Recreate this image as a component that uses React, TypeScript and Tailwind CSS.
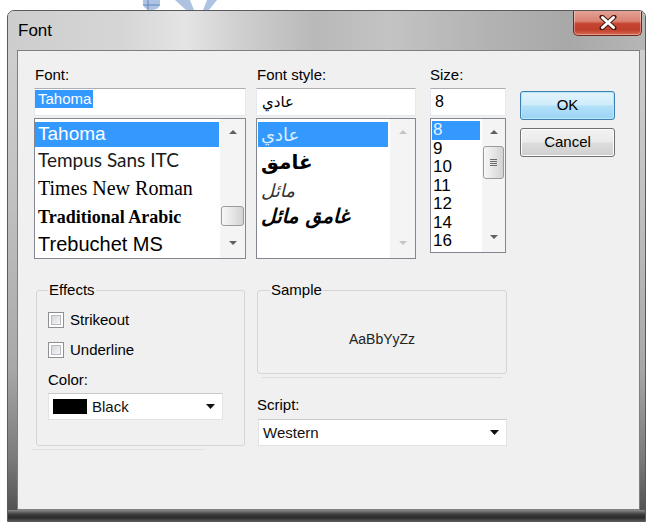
import React from "react";

type Dir = "up" | "down";

function Tri({ dir, fill, w = 8, h = 4 }: { dir: Dir; fill: string; w?: number; h?: number }) {
  const d = dir === "up" ? `M0 ${h} L${w / 2} 0 L${w} ${h} Z` : `M0 0 L${w} 0 L${w / 2} ${h} Z`;
  return (
    <svg width={w} height={h} viewBox={`0 0 ${w} ${h}`} className="block">
      <path d={d} fill={fill} />
    </svg>
  );
}

function ScrollBar({ kind }: { kind: "font" | "style" | "size" }) {
  const arrow = kind === "style" ? "#c4c4c4" : "#606060";
  return (
    <div className={`flex h-full flex-col bg-[#f4f4f4] ${kind === "size" ? "w-[23px]" : "w-[25px]"}`}>
      <div className="flex h-[26px] items-center justify-center">
        <Tri dir="up" fill={arrow} />
      </div>
      <div className={`flex flex-1 flex-col px-[1px] ${kind === "font" ? "justify-end pb-[2px]" : "pt-[1px]"}`}>
        {kind === "font" && (
          <div className="h-[20px] rounded-[3px] border border-[#9b9b9b] bg-[linear-gradient(90deg,#f7f7f7,#e4e4e4_55%,#d2d2d2)]" />
        )}
        {kind === "size" && (
          <div className="flex h-[33px] flex-col items-center justify-center gap-[1px] rounded-[3px] border border-[#9b9b9b] bg-[linear-gradient(90deg,#f7f7f7,#e4e4e4_55%,#d2d2d2)]">
            <div className="h-[1px] w-[7px] bg-[#6a6a6a]" />
            <div className="h-[1px] w-[7px] bg-[#6a6a6a]" />
            <div className="h-[1px] w-[7px] bg-[#6a6a6a]" />
            <div className="h-[1px] w-[7px] bg-[#6a6a6a]" />
          </div>
        )}
      </div>
      <div className="flex h-[30px] items-center justify-center">
        <Tri dir="down" fill={arrow} />
      </div>
    </div>
  );
}

const fontItems = [
  { name: "Tahoma", cls: "h-[25px] text-[19px] font-['Liberation_Sans',sans-serif]", sel: true },
  { name: "Tempus Sans ITC", cls: "h-[26px] text-[19px] font-['Lato',sans-serif] text-[#1a1a1a]", sel: false },
  { name: "Times New Roman", cls: "h-[30px] text-[20px] font-['Liberation_Serif',serif]", sel: false },
  { name: "Traditional Arabic", cls: "h-[28px] text-[18px] font-['Liberation_Serif',serif] font-bold", sel: false },
  { name: "Trebuchet MS", cls: "h-[26px] text-[20px] font-['Liberation_Sans',sans-serif]", sel: false },
];

const styleItems = [
  { name: "عادي", cls: "h-[25px] text-[18px] text-[#dcefff]", sel: true },
  { name: "غامق", cls: "h-[30px] text-[20px] font-bold", sel: false },
  { name: "مائل", cls: "h-[26px] text-[18px] italic text-[#333]", sel: false },
  { name: "غامق مائل", cls: "h-[26px] text-[20px] font-bold italic", sel: false },
];

const sizes = ["8", "9", "10", "11", "12", "14", "16"];

function Combo({ value, swatch, width }: { value: string; swatch?: boolean; width: string }) {
  return (
    <div
      className={`flex h-[27px] items-center border border-[#e2e2e2] border-t-[#c9c9c9] bg-white pl-[4px] pr-[7px] ${width}`}
    >
      {swatch && <div className="mr-[5px] h-[15px] w-[34px] bg-black" />}
      <span className="flex-1 text-[15px] leading-[18px] text-[#111]">{value}</span>
      <Tri dir="down" fill="#111" w={9} h={5} />
    </div>
  );
}

function CheckRow({ label }: { label: string }) {
  return (
    <div className="flex h-[20px] items-center">
      <div className="h-[16px] w-[16px] border border-[#8f8f8f] bg-white p-[2px]">
        <div className="h-full w-full border border-[#b8bcc2] bg-[linear-gradient(135deg,#d4d7dc,#f6f6f6)]" />
      </div>
      <span className="ml-[6px] text-[15px] leading-[18px]">{label}</span>
    </div>
  );
}

export default function App() {
  return (
    <div className="flex h-[523px] w-[646px] flex-col overflow-hidden bg-white font-['Liberation_Sans',Arial,sans-serif] text-black">
      {/* watermark peeking above the window */}
      <div className="h-[10px] shrink-0">
        <svg width="646" height="10" viewBox="0 0 646 10" className="block">
          <path d="M143 0 L160 0 L160 3 Q160 10 151.5 10 Q143 10 143 3 Z" fill="#aec3e2" />
          <path d="M148 0 L148 10 M143 5 L160 5" stroke="#5f86bf" strokeWidth="1" />
          <path d="M175 0 L190 0 L194 10 L186 10 Z" fill="#aec3e2" />
          <path d="M207 0 L217 0 L209 10 L203 10 Z" fill="#aec3e2" />
        </svg>
      </div>

      {/* dialog window */}
      <div className="ml-[7px] flex h-[512px] w-[639px] shrink-0 flex-col overflow-hidden rounded-t-[7px] border border-[#5a5a5a] bg-[linear-gradient(180deg,#d2d2d2_0%,#c2c2c2_35%,#a8a8a8_70%,#7a7a7a_88%,#4a4a4a_100%)]">
        {/* title bar */}
        <div className="flex h-[39px] shrink-0 justify-between bg-[linear-gradient(90deg,#cdcdcd_0%,#d6d6d6_18%,#e4e4e4_28%,#d0d0d0_36%,#b9b9b9_48%,#c3c3c3_60%,#b2b2b2_76%,#a8a8a8_88%,#b6b6b6_100%)]">
          <span className="self-center pl-[10px] text-[17px] leading-[20px] text-black">Font</span>
          <div className="mr-[3px] -mt-[1px] flex h-[26px] w-[69px] items-center justify-center rounded-b-[5px] border border-[#6b2a20] border-t-0 bg-[linear-gradient(180deg,#e6a598_0%,#d98272_45%,#c64430_55%,#c0402c_80%,#d86a52_100%)] shadow-[inset_0_0_0_1px_rgba(255,255,255,0.35)]">
            <svg width="18" height="15" viewBox="0 0 18 15">
              <path d="M3 2 L15 13 M15 2 L3 13" stroke="#4a1a14" strokeWidth="5" strokeLinecap="round" />
              <path d="M3.5 2.5 L14.5 12.5 M14.5 2.5 L3.5 12.5" stroke="#ffffff" strokeWidth="3" strokeLinecap="round" />
            </svg>
          </div>
        </div>

        {/* frame sides and client area */}
        <div className="flex h-[460px] shrink-0">
          <div className="w-[9px] shrink-0" />
          <div className="flex w-[623px] shrink-0 flex-col border border-[#7f7f7f] bg-[#f0f0f0]">
            {/* font / style / size pickers */}
            <div className="flex pl-[16px] pt-[15px]">
              {/* Font column */}
              <div className="flex w-[212px] flex-col">
                <span className="h-[18px] pl-[1px] text-[15px] leading-[18px]">Font:</span>
                <div className="mt-[4px] flex h-[28px] items-start border border-[#e3e9ef] border-t-[#abadb3] bg-white pt-[1px]">
                  <span className="h-[18px] bg-[#3399ff] pl-[3px] pr-[2px] text-[15px] leading-[18px] text-white">Tahoma</span>
                </div>
                <div className="mt-[2px] flex h-[141px] border border-[#828790] bg-white">
                  <div className="flex flex-1 flex-col pr-[1px] pt-[3px]">
                    {fontItems.map((f) => (
                      <div
                        key={f.name}
                        className={`flex shrink-0 items-center whitespace-nowrap pl-[3px] ${f.cls} ${f.sel ? "bg-[#3399ff] text-white" : ""}`}
                      >
                        {f.name}
                      </div>
                    ))}
                  </div>
                  <ScrollBar kind="font" />
                </div>
              </div>

              {/* Font style column */}
              <div className="ml-[10px] flex w-[160px] flex-col">
                <span className="h-[18px] pl-[1px] text-[15px] leading-[18px]">Font style:</span>
                <div className="mt-[4px] flex h-[28px] items-center border border-[#e3e9ef] border-t-[#abadb3] bg-white pl-[5px] font-['DejaVu_Sans',sans-serif] text-[15px]">
                  <span>عادي</span>
                </div>
                <div className="mt-[2px] flex h-[141px] border border-[#828790] bg-white font-['DejaVu_Sans',sans-serif]">
                  <div className="flex flex-1 flex-col pl-[1px] pr-[2px] pt-[3px]">
                    {styleItems.map((s) => (
                      <div
                        key={s.name}
                        className={`flex shrink-0 items-center whitespace-nowrap pl-[3px] ${s.cls} ${s.sel ? "bg-[#3399ff]" : ""}`}
                      >
                        <span>{s.name}</span>
                      </div>
                    ))}
                  </div>
                  <ScrollBar kind="style" />
                </div>
              </div>

              {/* Size column */}
              <div className="ml-[14px] flex w-[76px] flex-col">
                <span className="h-[18px] text-[15px] leading-[18px]">Size:</span>
                <div className="mt-[4px] flex h-[28px] items-center border border-[#e3e9ef] border-t-[#abadb3] bg-white pl-[4px] text-[16px]">
                  8
                </div>
                <div className="mt-[2px] flex h-[135px] border border-[#828790] bg-white">
                  <div className="flex flex-1 flex-col pl-[1px] pr-[2px] pt-[2px]">
                    {sizes.map((s, i) => (
                      <div
                        key={s}
                        className={`flex h-[18.5px] shrink-0 items-center pl-[1px] text-[17px] leading-[18px] ${i === 0 ? "bg-[#3399ff] text-[#e4f2ff]" : ""}`}
                      >
                        {s}
                      </div>
                    ))}
                  </div>
                  <ScrollBar kind="size" />
                </div>
              </div>

              {/* Buttons */}
              <div className="ml-[14px] flex w-[95px] flex-col pt-[25px]">
                <button className="flex h-[29px] items-center justify-center rounded-[3px] border border-[#3c7fb1] bg-[linear-gradient(180deg,#e3f4fd_0%,#cfecfb_48%,#b2e0f9_52%,#9bd4f3_100%)] text-[15px] shadow-[inset_0_0_0_1px_#b9e6fb]">
                  OK
                </button>
                <button className="mt-[8px] flex h-[29px] items-center justify-center rounded-[3px] border border-[#707070] bg-[linear-gradient(180deg,#f2f2f2_0%,#ebebeb_48%,#dddddd_52%,#cfcfcf_100%)] text-[15px] shadow-[inset_0_0_0_1px_#fcfcfc]">
                  Cancel
                </button>
              </div>
            </div>

            {/* effects / sample / script */}
            <div className="mt-[22px] flex pl-[18px]">
              <div className="flex w-[209px] flex-col">
                <fieldset className="rounded-[3px] border border-[#d5d5d5] pb-[25px] pl-[11px] pr-[11px]">
                  <legend className="px-[1px] text-[15px] leading-[18px]">Effects</legend>
                  <div className="mt-[11px]">
                    <CheckRow label="Strikeout" />
                  </div>
                  <div className="mt-[10px]">
                    <CheckRow label="Underline" />
                  </div>
                  <div className="mt-[11px] h-[18px] text-[15px] leading-[18px]">Color:</div>
                  <div className="mt-[4px]">
                    <Combo value="Black" swatch width="w-[175px]" />
                  </div>
                </fieldset>
                <div className="ml-[-4px] mr-[40px] mt-[3px] h-[1px] bg-[#e2e2e2]" />
              </div>

              <div className="ml-[12px] flex w-[250px] flex-col">
                <fieldset className="rounded-[3px] border border-[#d5d5d5] pl-[12px]">
                  <legend className="px-[1px] text-[15px] leading-[18px]">Sample</legend>
                  <div className="flex h-[74px] items-center justify-center pr-[12px] pt-[6px] font-['Liberation_Sans',sans-serif] text-[14px] text-[#222]">
                    AaBbYyZz
                  </div>
                </fieldset>
                <div className="mx-[5px] mt-[3px] h-[1px] bg-[#dedede]" />
                <span className="mt-[18px] h-[18px] text-[15px] leading-[18px]">Script:</span>
                <div className="ml-[1px] mt-[5px]">
                  <Combo value="Western" width="w-[249px]" />
                </div>
              </div>
            </div>
          </div>
          <div className="flex-1" />
        </div>

        {/* bottom frame */}
        <div className="h-[11px] shrink-0 bg-[linear-gradient(180deg,#8a8a8a_0%,#3c3c3c_40%,#2c2c2c_70%,#555555_100%)]" />
      </div>
    </div>
  );
}
